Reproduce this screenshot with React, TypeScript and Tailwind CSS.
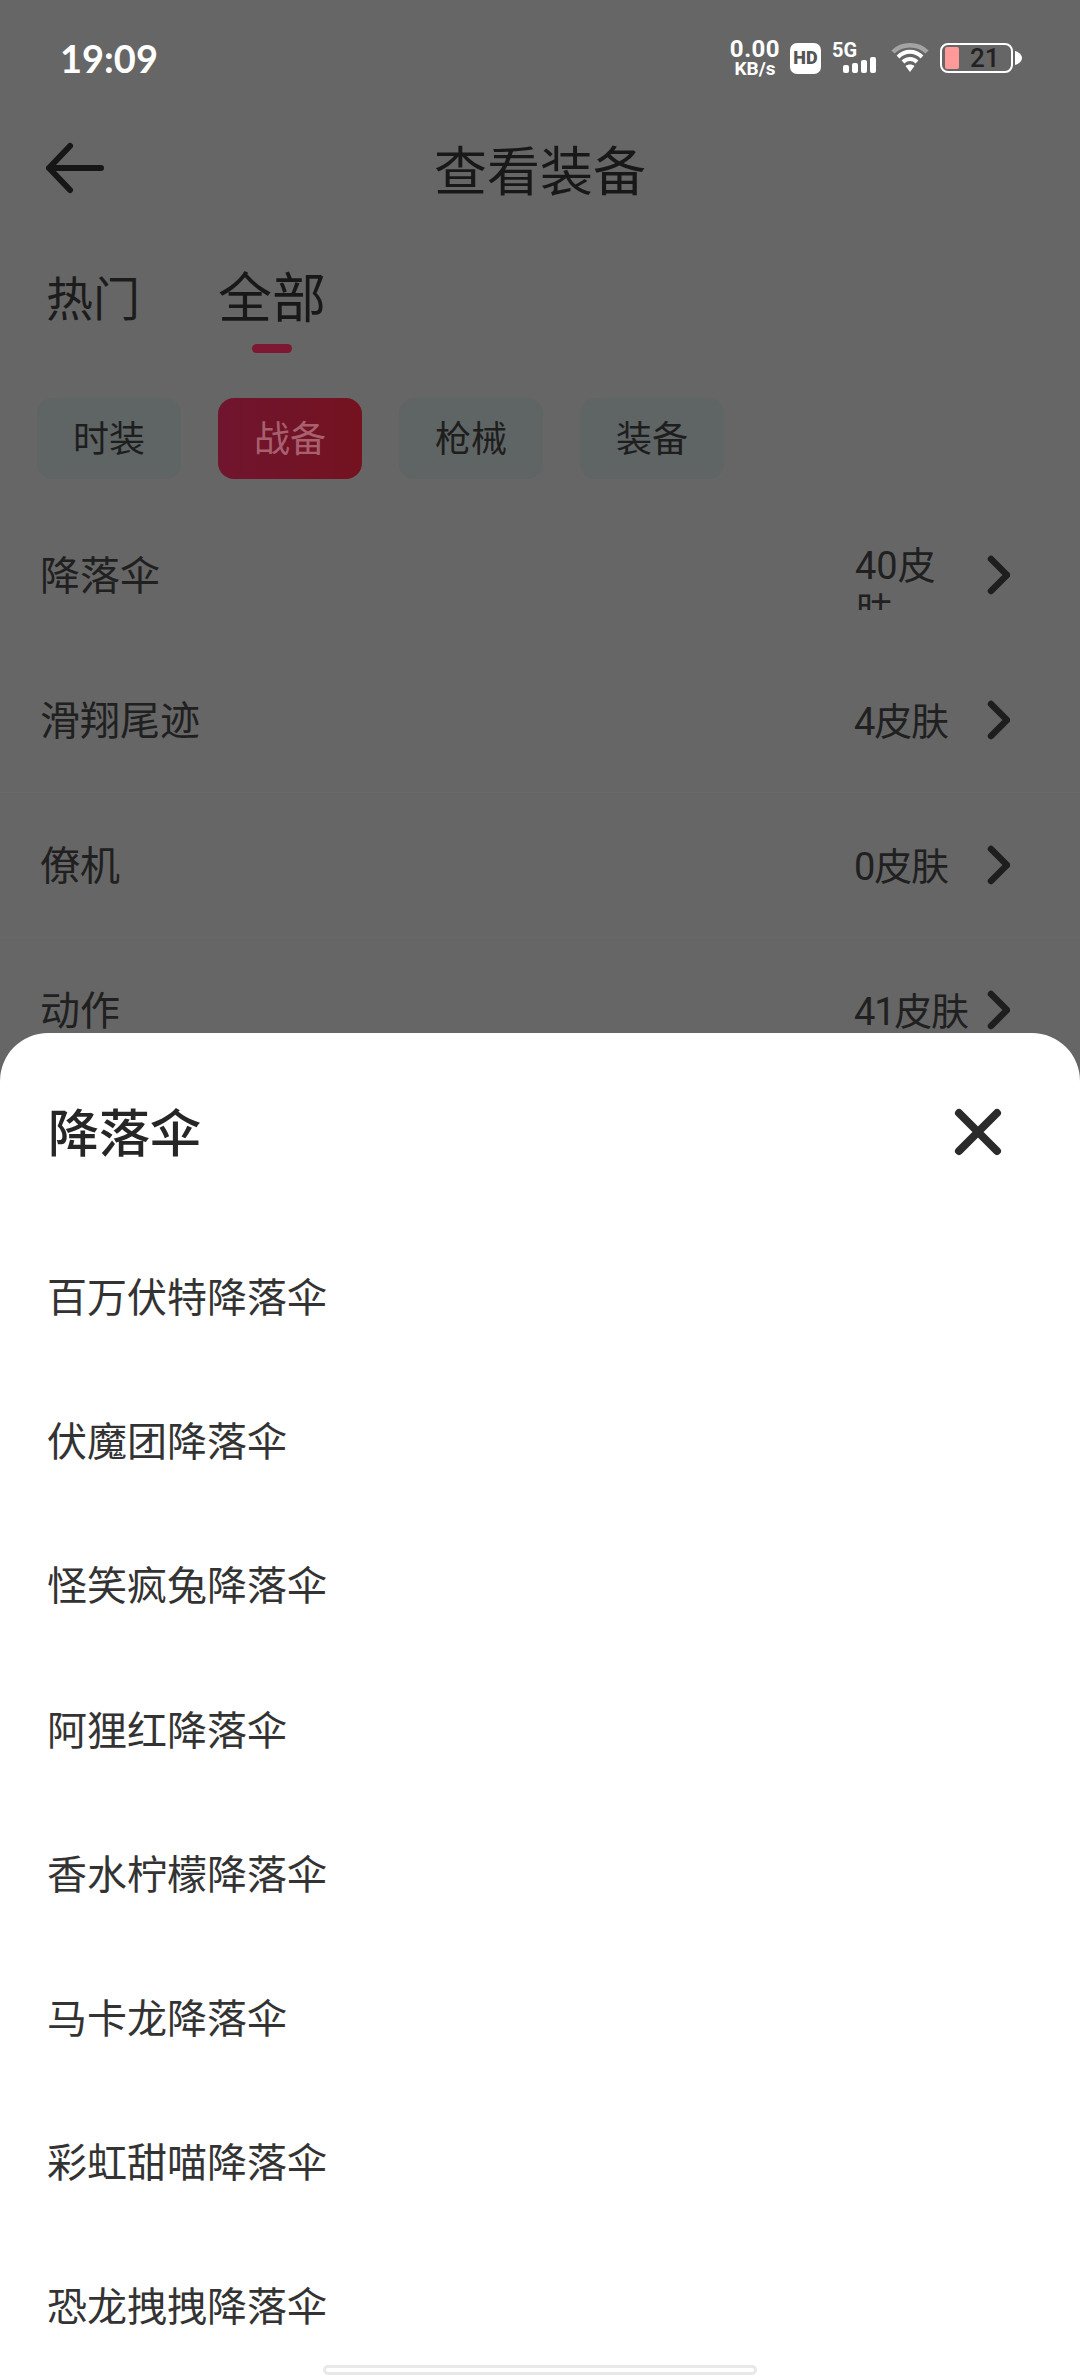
const rows = [
    { name: "滑翔尾迹", count: "4皮肤" },
    { name: "僚机", count: "0皮肤" },
    { name: "动作", count: "41皮肤" },
];

const chips = ["时装", "战备", "枪械", "装备"];

const items = [
    "百万伏特降落伞",
    "伏魔团降落伞",
    "怪笑疯兔降落伞",
    "阿狸红降落伞",
    "香水柠檬降落伞",
    "马卡龙降落伞",
    "彩虹甜喵降落伞",
    "恐龙拽拽降落伞",
];

function Chevron() {
    return (
        <svg width="24" height="40" viewBox="0 0 24 40" fill="none" className="shrink-0">
            <path d="M5 4 L21 20 L5 36" stroke="#1e1e1e" strokeWidth="6.5" strokeLinecap="round" strokeLinejoin="round" />
        </svg>
    );
}

function StatusBar() {
    return (
        <div className="flex h-[116px] items-center justify-between pr-[58px] pl-[60px] text-white">
            <span className="font-['Lato',sans-serif] text-[38px] font-bold">19:09</span>
            <div className="flex items-center">
                <div className="flex w-[52px] flex-col items-center font-['Roboto',sans-serif] font-bold">
                    <span className="text-[24px] leading-[21px] tracking-[0.5px]">0.00</span>
                    <span className="text-[19px] leading-[18px]">KB/s</span>
                </div>
                <div className="ml-[9px] flex h-[31px] w-[31px] items-center justify-center rounded-[7px] bg-white font-['Roboto',sans-serif] text-[18px] leading-none font-black text-[#555]">
                    HD
                </div>
                <svg width="46" height="32" viewBox="0 0 46 32" className="ml-[11px]" fill="white">
                    <text x="0" y="15" fontFamily="Roboto" fontWeight="700" fontSize="20">5G</text>
                    <rect x="11" y="23" width="6" height="8" rx="2" />
                    <rect x="20" y="21" width="6" height="10" rx="2" />
                    <rect x="29" y="18" width="6" height="13" rx="2" />
                    <rect x="38" y="15" width="6" height="16" rx="2" />
                </svg>
                <svg width="38" height="30" viewBox="0 0 38 30" className="ml-[13px]" fill="none">
                    <path d="M2 9 C11 0 27 0 36 9" stroke="#a3a3a3" strokeWidth="4.5" />
                    <path d="M7 14 C14 7 24 7 31 14" stroke="white" strokeWidth="4" />
                    <path d="M12 19 C16 15 22 15 26 19" stroke="white" strokeWidth="4" />
                    <path d="M14.5 23 L19 29 L23.5 23 C21 21 17 21 14.5 23 Z" fill="white" />
                </svg>
                <div className="ml-[11px] flex h-[30px] w-[73px] items-center rounded-[8px] border-[2.5px] border-white pl-[3px]">
                    <div className="h-[22px] w-[14px] rounded-[2px] bg-[#ff9a9a]" />
                    <span className="ml-[11px] font-['Roboto',sans-serif] text-[26px] leading-none font-medium text-[#222]">21</span>
                </div>
                <svg width="7" height="14" viewBox="0 0 7 14" className="ml-[2px]" fill="white">
                    <path d="M0 0 C4 1 7 4 7 7 C7 10 4 13 0 14 Z" />
                </svg>
            </div>
        </div>
    );
}

export default function App() {
    return (
        <div className="relative h-[2376px] w-[1080px] overflow-hidden bg-[#666666] font-['Roboto','Noto_Sans_CJK_SC',sans-serif]">
            <StatusBar />

            <div className="relative flex h-[108px] items-center justify-center">
                <svg width="62" height="52" viewBox="0 0 62 52" fill="none" className="absolute top-[26px] left-[44px]">
                    <path d="M26 4 L5 26 L26 48 M5 26 H57" stroke="#161616" strokeWidth="6" strokeLinecap="round" strokeLinejoin="round" />
                </svg>
                <h1 className="pt-[6px] text-[53px] leading-none text-[#181818]">查看装备</h1>
            </div>

            <div className="flex gap-[78px] pt-[46px] pl-[46px]">
                <div className="text-[47px] leading-[60px] text-[#1c1c1c]">热门</div>
                <div className="flex flex-col items-center">
                    <div className="text-[54px] leading-[60px] text-[#181818]">全部</div>
                    <div className="mt-[14px] h-[9px] w-[40px] rounded-full bg-[#7e1732]" />
                </div>
            </div>

            <div className="mt-[45px] flex gap-[37px] pl-[37px]">
                {chips.map((chip) =>
                    chip === "战备" ? (
                        <div
                            key={chip}
                            className="flex h-[81px] w-[144px] items-center justify-center rounded-[16px] bg-gradient-to-r from-[#70152f] to-[#74121f] pt-[3px] text-[36px] text-[#a8606f]"
                        >
                            {chip}
                        </div>
                    ) : (
                        <div
                            key={chip}
                            className="flex h-[81px] w-[144px] items-center justify-center rounded-[16px] bg-[#5f6464] pt-[3px] text-[36px] text-[#1e1e1e]"
                        >
                            {chip}
                        </div>
                    ),
                )}
            </div>

            <div className="mt-[23px]">
                <div className="flex h-[145px] items-center justify-between pr-[70px] pl-[40px] text-[#202020]">
                    <span className="pt-[4px] text-[40px]">降落伞</span>
                    <div className="flex items-center gap-[18px]">
                        <div className="h-[70px] w-[114px] overflow-hidden pt-[3px] pl-[1px] text-[38px] leading-[46px]">
                            40皮
                            <br />肤
                        </div>
                        <Chevron />
                    </div>
                </div>
                {rows.map((row, i) => (
                    <div
                        key={row.name}
                        className={
                            i === 0
                                ? "flex h-[145px] items-center justify-between pr-[70px] pl-[40px] text-[#202020]"
                                : "flex h-[145px] items-center justify-between border-t border-[#696969] pr-[70px] pl-[40px] text-[#202020]"
                        }
                    >
                        <span className="pt-[4px] text-[40px]">{row.name}</span>
                        <div className="flex items-center gap-[18px]">
                            <div className="w-[114px] pt-[4px] text-[38px] leading-[52px] tracking-[-1.2px] whitespace-nowrap">{row.count}</div>
                            <Chevron />
                        </div>
                    </div>
                ))}
            </div>

            {/* bottom sheet */}
            <div className="absolute inset-x-0 top-[1033px] bottom-0 rounded-t-[48px] bg-white">
                <div className="flex h-[194px] items-center justify-between pr-[76px] pl-[48px]">
                    <h2 className="pt-[10px] text-[51px] font-medium text-[#262626]">降落伞</h2>
                    <svg width="52" height="52" viewBox="0 0 52 52" fill="none" className="mt-[4px]">
                        <path d="M7 7 L45 45 M45 7 L7 45" stroke="#2b2b2b" strokeWidth="8" strokeLinecap="round" />
                    </svg>
                </div>
                <div className="flex flex-col">
                    {items.map((item) => (
                        <div key={item} className="flex h-[144.2px] items-center pl-[47px] text-[40px] text-[#333333]">
                            {item}
                        </div>
                    ))}
                </div>
            </div>

            <div className="absolute bottom-[1px] left-[323px] h-[10px] w-[434px] rounded-full border-[3px] border-[#e8e8e8] bg-white" />
        </div>
    );
}
